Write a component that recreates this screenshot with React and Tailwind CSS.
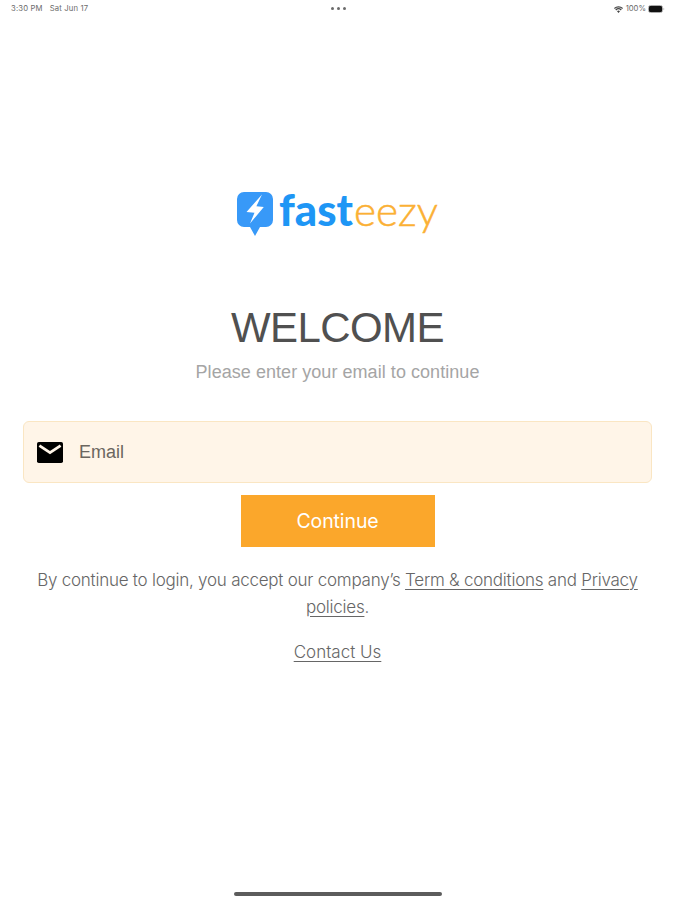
import React, { useState } from 'react';

const StatusBar = () => (
  <div className="grid grid-cols-3 items-center h-4 pl-[11px] pr-[10px] text-[#6b6b6b] text-[7.7px] leading-4 font-['Inter',sans-serif]">
    <div className="flex gap-[7px] pt-px whitespace-nowrap tracking-[0.15px]">
      <span>3:30 PM</span>
      <span>Sat Jun 17</span>
    </div>
    <div className="flex justify-center gap-[3px]">
      <span className="w-[3px] h-[3px] rounded-full bg-[#6b6b6b]"></span>
      <span className="w-[3px] h-[3px] rounded-full bg-[#6b6b6b]"></span>
      <span className="w-[3px] h-[3px] rounded-full bg-[#6b6b6b]"></span>
    </div>
    <div className="flex justify-end items-center pt-px">
      <svg viewBox="0 0 16 12" className="w-[9px] h-[7px] mr-[3px]" fill="#444444">
        <path d="M8 12 5.4 9.2a3.8 3.8 0 0 1 5.2 0zM3.9 7.6 2.3 5.9a8.4 8.4 0 0 1 11.4 0l-1.6 1.7a6 6 0 0 0-8.2 0zM1.4 4.9 0 3.4a11.7 11.7 0 0 1 16 0l-1.4 1.5a9.6 9.6 0 0 0-13.2 0z" />
      </svg>
      <span>100%</span>
      <svg viewBox="0 0 17 8" className="w-[17px] h-2 ml-[2px]">
        <rect x="0.5" y="0.5" width="14" height="7" rx="2" fill="none" stroke="#aaaaaa" />
        <rect x="1" y="1" width="13" height="6" rx="1.3" fill="#111111" />
        <path d="M15.5 2.8v2.4c1-.3 1-2.1 0-2.4z" fill="#aaaaaa" />
      </svg>
    </div>
  </div>
);

const Logo = () => (
  <svg viewBox="0 0 212 70" className="w-[212px] h-[70px]" role="img" aria-label="fasteezy">
    <path d="M12 14h22a7 7 0 0 1 7 7v21a7 7 0 0 1-7 7h-6l-5 9-5-9h-6a7 7 0 0 1-7-7V21a7 7 0 0 1 7-7z" fill="#3899f8" />
    <path d="M30 16.5 14.5 34l8 .8L18 45.5 31.8 29l-7.4-.8z" fill="#ffffff" />
    <text x="47" y="48" fontSize="43" fontWeight="900" fill="#1e96f5" textLength="74" lengthAdjust="spacingAndGlyphs" className="font-['Lato',sans-serif]">fast</text>
    <text x="122" y="48" fontSize="41" fontWeight="300" fill="#fbb034" stroke="#fbb034" strokeWidth="0.5" textLength="84" lengthAdjust="spacingAndGlyphs" className="font-['Lato',sans-serif]">eezy</text>
  </svg>
);

const MailIcon = () => (
  <svg viewBox="0 0 26 21" className="w-[26px] h-[21px] shrink-0">
    <rect width="26" height="21" rx="1.8" fill="#000000" />
    <path d="m2.4 3.6 10.6 7 10.6-7" fill="none" stroke="#fff5e8" strokeWidth="2.8" />
  </svg>
);

const App = () => {
  const [email, setEmail] = useState('');

  return (
    <div className="h-[900px] w-full flex flex-col bg-white overflow-hidden">
      <StatusBar />

      <main className="flex-1 flex flex-col items-center px-[23px] pt-[162px]">
        <Logo />

        <h1 className="mt-[55px] text-[42px] leading-[50px] tracking-[-0.6px] text-[#505050] font-['Liberation_Sans',sans-serif]">WELCOME</h1>
        <p className="mt-[7px] text-[18px] leading-6 tracking-[0.05px] text-[#a5a5a5] font-['Liberation_Sans',sans-serif]">Please enter your email to continue</p>

        <form onSubmit={(e) => e.preventDefault()} className="w-full mt-[37px] flex flex-col items-center">
          <label className="w-full h-[62px] flex items-center gap-4 px-[13px] bg-[#fff5e8] border border-[#fae6c3] rounded-md">
            <MailIcon />
            <input
              type="email"
              placeholder="Email"
              value={email}
              onChange={(e) => setEmail(e.target.value)}
              className="flex-1 bg-transparent text-[18px] text-[#6b665f] placeholder:text-[#6b665f] focus:outline-none font-['Liberation_Sans',sans-serif]"
            />
          </label>
          <button type="submit" className="mt-3 pt-px w-[194px] h-[52px] bg-[#fba72b] text-white text-[19.5px] tracking-[-0.1px] font-['Inter',sans-serif]">
            Continue
          </button>
        </form>

        <p className="mt-5 text-center text-[17px] leading-[26.5px] tracking-[-0.24px] text-[#666666] font-light underline-offset-[3px] font-['Inter',sans-serif]">
          By continue to login, you accept our company’s <a href="#terms" className="underline">Term &amp; conditions</a> and <a href="#privacy" className="underline">Privacy<br />policies</a>.
        </p>
        <a href="#contact" className="mt-[19px] text-[17px] leading-[26px] text-[#666666] font-light underline underline-offset-[3px] font-['Inter',sans-serif]">Contact Us</a>
      </main>

      <div className="w-[208px] h-[4px] mb-[4px] mx-auto rounded-full bg-[#5c5c5c]"></div>
    </div>
  );
};

export default App;
